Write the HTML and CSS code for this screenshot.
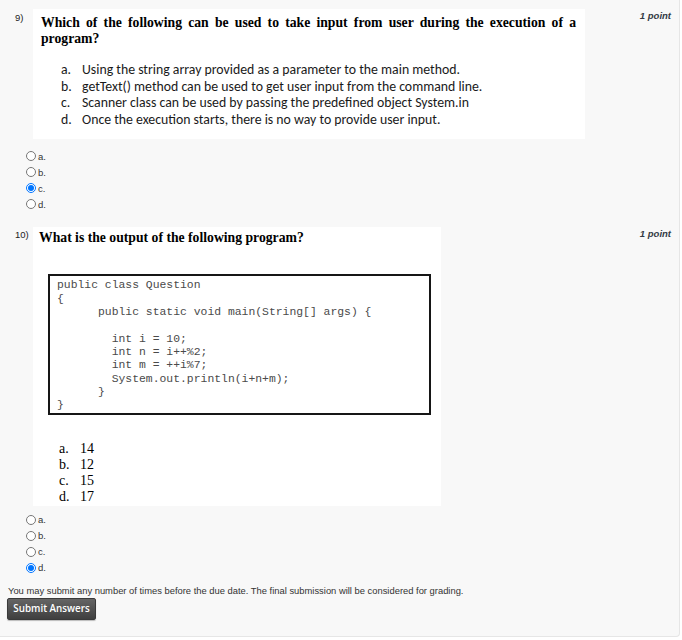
FILE: index.html
```html
<!DOCTYPE html>
<html lang="en">
<head>
<meta charset="utf-8">
<title>Quiz</title>
<link rel="stylesheet" href="styles.css">
</head>
<body>
<div class="card">
  <section class="question q9">
    <div class="qnum">9)</div>
    <div class="qbox qbox9">
      <p class="qtitle justify">Which of the following can be used to take input from user during the execution of a program?</p>
      <ul class="choices calibri">
        <li><span class="mk">a.</span>Using the string array provided as a parameter to the main method.</li>
        <li><span class="mk">b.</span>getText() method can be used to get user input from the command line.</li>
        <li><span class="mk">c.</span>Scanner class can be used by passing the predefined object System.in</li>
        <li><span class="mk">d.</span>Once the execution starts, there is no way to provide user input.</li>
      </ul>
    </div>
    <div class="points">1 point</div>
    <div class="radios radios9">
      <label class="opt"><input type="radio" name="q9"><span>a.</span></label>
      <label class="opt"><input type="radio" name="q9"><span>b.</span></label>
      <label class="opt"><input type="radio" name="q9" checked><span>c.</span></label>
      <label class="opt"><input type="radio" name="q9"><span>d.</span></label>
    </div>
  </section>

  <section class="question q10">
    <div class="qnum">10)</div>
    <div class="qbox qbox10">
      <p class="qtitle">What is the output of the following program?</p>
      <pre class="code">public class Question
{
      public static void main(String[] args) {

        int i = 10;
        int n = i++%2;
        int m = ++i%7;
        System.out.println(i+n+m);
      }
}</pre>
      <ul class="choices serif">
        <li><span class="mk">a.</span>14</li>
        <li><span class="mk">b.</span>12</li>
        <li><span class="mk">c.</span>15</li>
        <li><span class="mk">d.</span>17</li>
      </ul>
    </div>
    <div class="points">1 point</div>
    <div class="radios radios10">
      <label class="opt"><input type="radio" name="q10"><span>a.</span></label>
      <label class="opt"><input type="radio" name="q10"><span>b.</span></label>
      <label class="opt"><input type="radio" name="q10"><span>c.</span></label>
      <label class="opt"><input type="radio" name="q10" checked><span>d.</span></label>
    </div>
  </section>

  <footer class="footer">
    <p class="note">You may submit any number of times before the due date. The final submission will be considered for grading.</p>
    <button class="submit" type="button">Submit Answers</button>
  </footer>
</div>
</body>
</html>
```

FILE: styles.css
```css
* { box-sizing: border-box; }

html, body {
  margin: 0;
  padding: 0;
  background: #ffffff;
}

body {
  font-family: "Liberation Sans", Arial, sans-serif;
  color: #333333;
}

.card {
  width: 680px;
  height: 637px;
  background: #f8f8f8;
  border-right: 1px solid #e6e6e6;
  border-bottom: 1px solid #e6e6e6;
  border-bottom-right-radius: 4px;
  padding: 9px 8px 0 0;
}

.question {
  display: grid;
  grid-template-columns: 33px auto 1fr;
  align-items: start;
}

.qnum {
  padding-left: 15px;
  padding-top: 3px;
  font-size: 9.5px;
  line-height: 12px;
  color: #222;
}

.q10 .qnum { padding-top: 2px; }

.points {
  justify-self: end;
  font-size: 9.5px;
  line-height: 12px;
  font-style: italic;
  font-weight: bold;
  color: #333a44;
  padding-top: 1px;
}

.qbox {
  background: #ffffff;
  color: #000;
}

.qbox9 {
  width: 552px;
  padding: 6px 9px 11px 8px;
}

.qbox10 {
  width: 408px;
  padding: 3px 8px 1px 6px;
}

.qtitle {
  margin: 0;
  font-family: "Liberation Serif", "Times New Roman", serif;
  font-weight: bold;
  font-size: 13.7px;
  line-height: 16px;
}

.justify { text-align: justify; }

.choices {
  list-style: none;
  margin: 0;
  padding: 0;
}

.choices li {
  display: flex;
}

.calibri {
  margin-top: 15px;
  padding-left: 20px;
  font-family: Carlito, Calibri, Lato, "Open Sans", sans-serif;
  font-size: 13.8px;
  line-height: 16.6px;
  color: #1a1a1a;
}

.calibri .mk { width: 21px; flex: none; }

.serif {
  margin-top: 26px;
  padding-left: 20px;
  font-family: "Liberation Serif", "Times New Roman", serif;
  font-size: 14px;
  line-height: 16px;
}

.serif .mk { width: 21px; flex: none; }

.code {
  margin: 28px 2px 0 9px;
  border: 2px solid #161616;
  padding: 3px 7px 0 7px;
  font-family: "Courier New", "Nimbus Mono PS", "Nimbus Mono L", FreeMono, "Liberation Mono", monospace;
  font-size: 11.4px;
  line-height: 13.33px;
  color: #4a4a4a;
  background: #fff;
}

.radios {
  grid-column: 1 / -1;
  padding-left: 26px;
  display: flex;
  flex-direction: column;
}

.radios9 { margin-top: 9px; margin-bottom: 15px; }
.radios10 { margin-top: 6px; }

.opt {
  display: flex;
  align-items: center;
  height: 16px;
  font-size: 9.5px;
  color: #333;
}

.opt input {
  width: 10px;
  height: 10px;
  margin: 0 2px 0 0;
}

.footer {
  padding-left: 7px;
}

.note {
  margin: 8px 0 0 1px;
  font-size: 9.4px;
  line-height: 13px;
  color: #333;
}

.submit {
  margin-top: 1px;
  width: 89px;
  height: 22px;
  border: 1px solid #3a3a3a;
  border-radius: 2px;
  background: linear-gradient(#656565, #3f3f3f);
  color: #fff;
  font-family: "Open Sans", sans-serif;
  font-weight: 600;
  font-size: 9.8px;
  padding: 0;
  box-shadow: 0 1px 1px rgba(0,0,0,0.25);
}
```
